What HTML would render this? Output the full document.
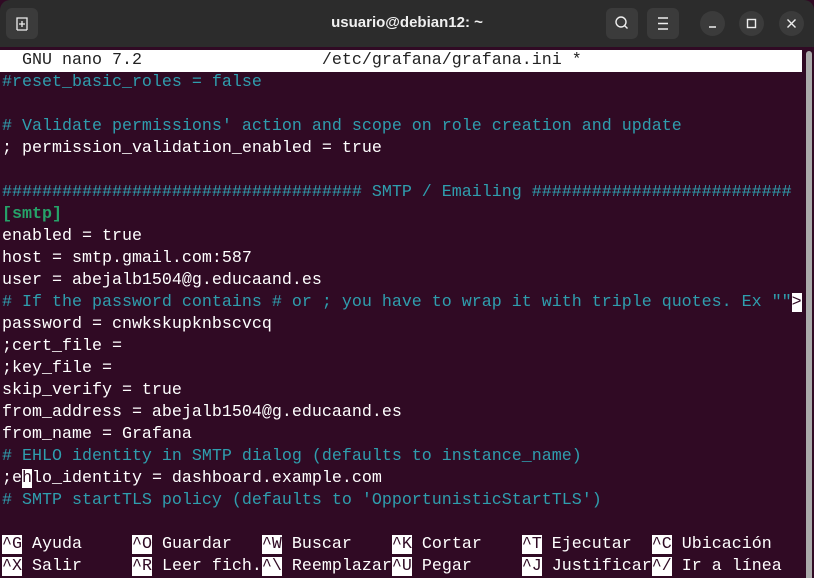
<!DOCTYPE html>
<html><head><meta charset="utf-8"><style>
html,body{margin:0;padding:0;width:814px;height:578px;overflow:hidden;background:#300a24;}
.title{position:absolute;left:0;top:0;width:814px;height:47px;background:#2c2c2c;border-radius:10px 10px 0 0;}
.ttl{position:absolute;left:0;width:814px;top:14px;text-align:center;color:#f0f0f0;font:bold 15px "Liberation Sans",sans-serif;}
.btn{position:absolute;top:8px;width:32px;height:31px;background:#3b3b3b;border-radius:6px;}
.circ{position:absolute;top:11px;width:25px;height:25px;border-radius:50%;background:#3b3b3b;}
.term{position:absolute;left:2px;top:50px;font-family:"Liberation Mono",monospace;font-size:16.67px;line-height:22px;color:#ffffff;white-space:normal;}
.term div{height:22px;white-space:pre;}
.c{color:#2f9eae;}
.g{color:#26a269;font-weight:bold;}
.hd{background:#fff;color:#222;width:800px;margin-left:-2px;padding-left:2px;}
.k{background:#fff;color:#300a24;}
.sb{position:absolute;left:806px;top:51px;width:6px;height:527px;background:#aaa;border-radius:3px 3px 0 0;}
</style></head><body>
<div class="title">
 <div class="btn" style="left:6px"><svg width="32" height="31" viewBox="0 0 32 31"><path d="M11 22V10h10v12M11 22h10M16 13v6M13 16h6" stroke="#eee" stroke-width="1.3" fill="none"/></svg></div>
 <div class="ttl">usuario@debian12: ~</div>
 <div class="btn" style="left:606px"><svg width="32" height="31"><circle cx="15" cy="14" r="5" stroke="#eee" stroke-width="1.4" fill="none"/><path d="M18.5 17.5l3 3" stroke="#eee" stroke-width="1.4"/></svg></div>
 <div class="btn" style="left:647px"><svg width="32" height="31"><path d="M11 10h10M11 15.5h10M11 21h10" stroke="#eee" stroke-width="1.4"/></svg></div>
 <div class="circ" style="left:700px"><svg width="25" height="25"><path d="M9 16h7" stroke="#eee" stroke-width="1.5"/></svg></div>
 <div class="circ" style="left:739px"><svg width="25" height="25"><rect x="8.5" y="8.5" width="8" height="8" stroke="#eee" stroke-width="1.4" fill="none"/></svg></div>
 <div class="circ" style="left:779px"><svg width="25" height="25"><path d="M8.5 8.5l8 8M16.5 8.5l-8 8" stroke="#eee" stroke-width="1.4"/></svg></div>
</div>
<div class="sb"></div>
<div class="term"><div class="hd">  GNU nano 7.2                  /etc/grafana/grafana.ini *</div><div class="c">#reset_basic_roles = false</div><div></div><div class="c"># Validate permissions' action and scope on role creation and update</div><div>; permission_validation_enabled = true</div><div></div><div class="c">#################################### SMTP / Emailing ##########################</div><div class="g">[smtp]</div><div>enabled = true</div><div>host = smtp.gmail.com:587</div><div>user = abejalb1504@g.educaand.es</div><div><span class="c"># If the password contains # or ; you have to wrap it with triple quotes. Ex ""</span><span class="k">&gt;</span></div><div>password = cnwkskupknbscvcq</div><div>;cert_file =</div><div>;key_file =</div><div>skip_verify = true</div><div>from_address = abejalb1504@g.educaand.es</div><div>from_name = Grafana</div><div class="c"># EHLO identity in SMTP dialog (defaults to instance_name)</div><div>;e<span class="k">h</span>lo_identity = dashboard.example.com</div><div class="c"># SMTP startTLS policy (defaults to 'OpportunisticStartTLS')</div><div></div><div><span class="k">^G</span> Ayuda     <span class="k">^O</span> Guardar   <span class="k">^W</span> Buscar    <span class="k">^K</span> Cortar    <span class="k">^T</span> Ejecutar  <span class="k">^C</span> Ubicación</div><div><span class="k">^X</span> Salir     <span class="k">^R</span> Leer fich.<span class="k">^\</span> Reemplazar<span class="k">^U</span> Pegar     <span class="k">^J</span> Justificar<span class="k">^/</span> Ir a línea</div></div>
</body></html>
